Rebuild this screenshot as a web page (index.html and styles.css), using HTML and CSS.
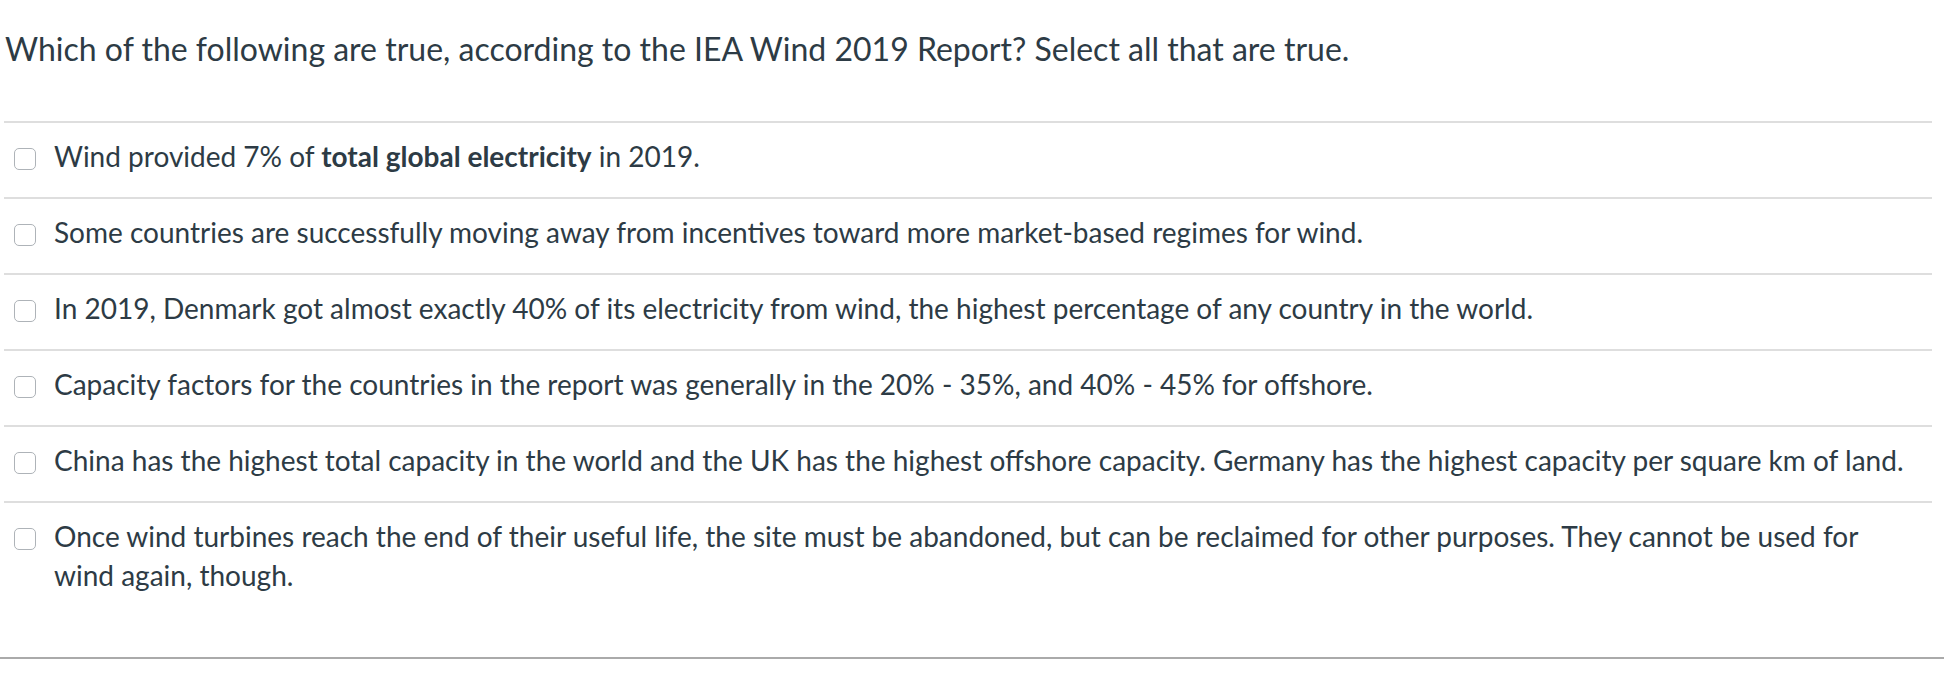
FILE: index.html
```html
<!DOCTYPE html>
<html>
<head>
<meta charset="utf-8">
<link rel="stylesheet" href="styles.css">
</head>
<body>
<div class="question">
  <div class="question-text">Which of the following are true, according to the IEA Wind 2019 Report? Select all that are true.</div>
  <div class="answers">
    <div class="answer"><span class="box"></span><div class="label">Wind provided 7% of <strong>total global electricity</strong> in 2019.</div></div>
    <div class="answer"><span class="box"></span><div class="label">Some countries are successfully moving away from incentives toward more market-based regimes for wind.</div></div>
    <div class="answer"><span class="box"></span><div class="label">In 2019, Denmark got almost exactly 40% of its electricity from wind, the highest percentage of any country in the world.</div></div>
    <div class="answer"><span class="box"></span><div class="label">Capacity factors for the countries in the report was generally in the 20% - 35%, and 40% - 45% for offshore.</div></div>
    <div class="answer"><span class="box"></span><div class="label">China has the highest total capacity in the world and the UK has the highest offshore capacity. Germany has the highest capacity per square km of land.</div></div>
    <div class="answer last"><span class="box"></span><div class="label">Once wind turbines reach the end of their useful life, the site must be abandoned, but can be reclaimed for other purposes. They cannot be used for wind again, though.</div></div>
  </div>
</div>
</body>
</html>
```
FILE: styles.css
```css
html, body {
  margin: 0;
  padding: 0;
  background: #fff;
}
body {
  font-family: Lato, "Open Sans", sans-serif;
  color: #2d3b45;
}
.question {
  border-bottom: 2px solid #aaaaaa;
  padding-bottom: 41px;
}
.question-text {
  font-size: 32px;
  line-height: 40px;
  padding: 29px 0 0 5px;
  height: 121px;
  box-sizing: border-box;
}
.answers {
  margin: 0 12px 0 4px;
}
.answer {
  display: flex;
  align-items: flex-start;
  border-top: 2px solid #dedede;
  padding: 14px 0 21px 0;
  font-size: 28px;
  line-height: 39px;
}
.box {
  flex: none;
  width: 20px;
  height: 20px;
  border: 1.5px solid #aeb3b8;
  border-radius: 5px;
  margin: 11px 18px 0 10px;
  background: #fff;
}
.label {
  flex: 1;
  padding-right: 20px;
}
.label strong {
  font-weight: 700;
}
```
